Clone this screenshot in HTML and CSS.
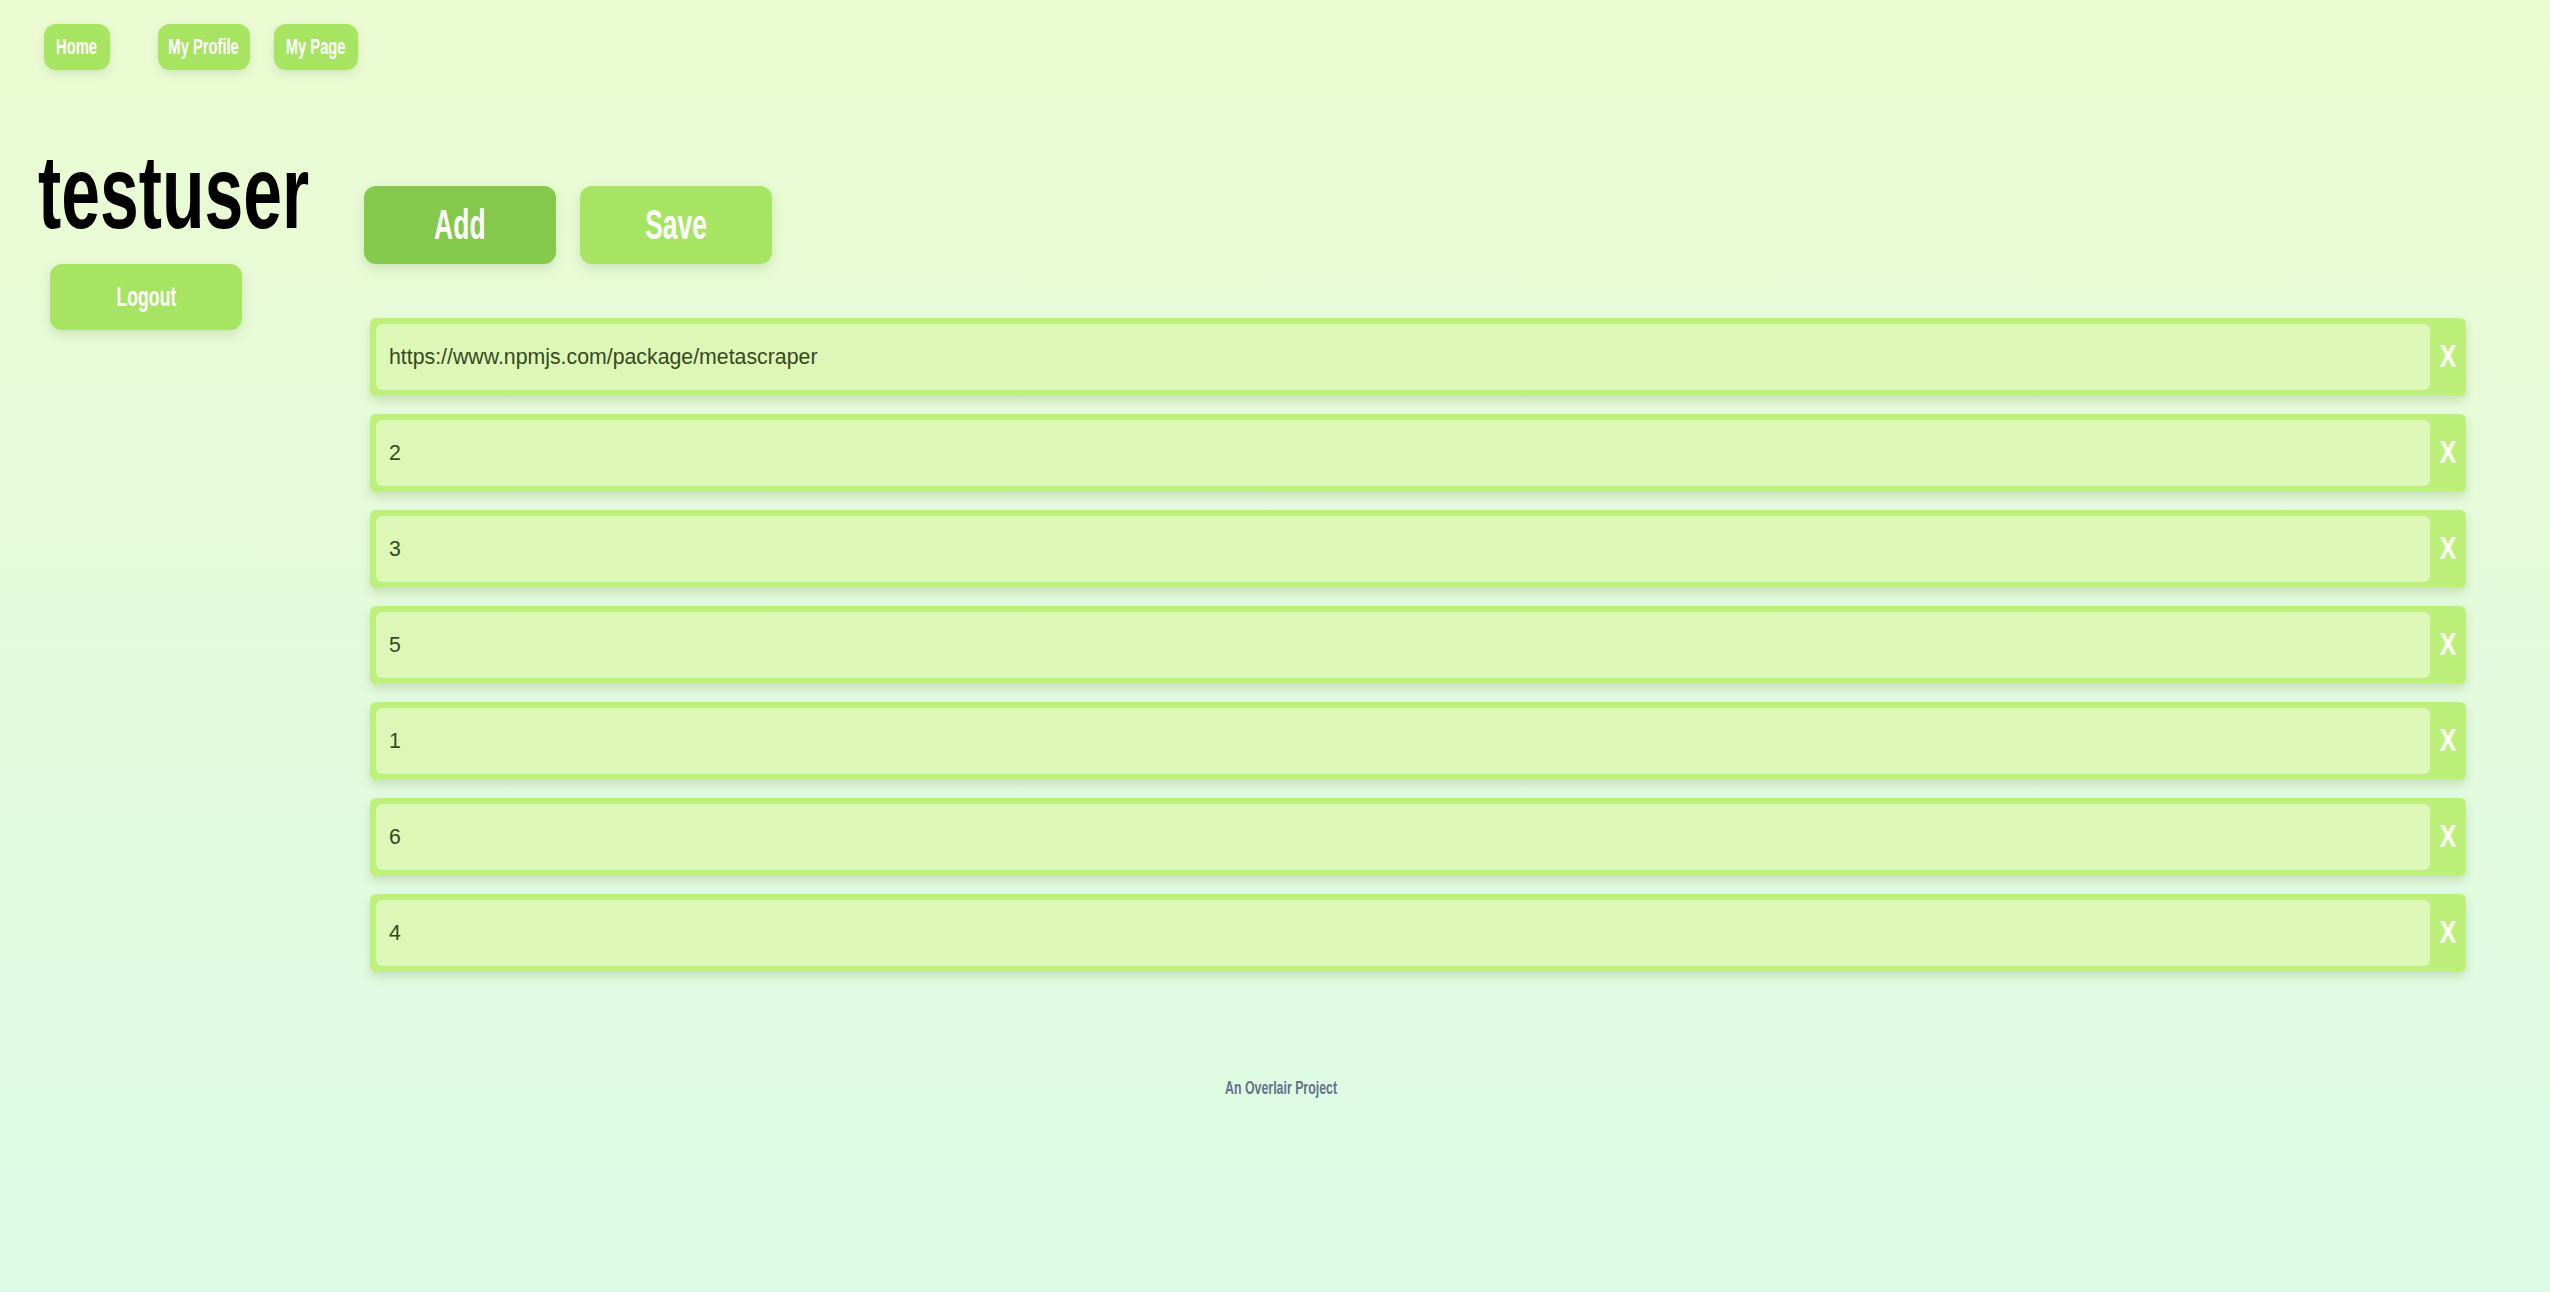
FILE: index.html
```html
<!DOCTYPE html>
<html lang="en">
<head>
<meta charset="utf-8">
<title>testuser</title>
<link rel="stylesheet" href="styles.css">
</head>
<body>
<nav class="nav">
  <a class="nav-btn nav-home" href="#"><span class="nav-text">Home</span></a>
  <a class="nav-btn nav-profile" href="#"><span class="nav-text">My Profile</span></a>
  <a class="nav-btn nav-page" href="#"><span class="nav-text">My Page</span></a>
</nav>
<div class="layout">
  <aside class="sidebar">
    <h1 class="title"><span class="title-text">testuser</span></h1>
    <button class="btn logout"><span class="narrow">Logout</span></button>
  </aside>
  <main class="content">
    <div class="actions">
      <button class="btn big add"><span class="narrow">Add</span></button>
      <button class="btn big save"><span class="narrow">Save</span></button>
    </div>
    <ul class="links">
      <li class="link-row"><input class="link-input" type="text" value="https://www.npmjs.com/package/metascraper"><span class="remove">X</span></li>
      <li class="link-row"><input class="link-input" type="text" value="2"><span class="remove">X</span></li>
      <li class="link-row"><input class="link-input" type="text" value="3"><span class="remove">X</span></li>
      <li class="link-row"><input class="link-input" type="text" value="5"><span class="remove">X</span></li>
      <li class="link-row"><input class="link-input" type="text" value="1"><span class="remove">X</span></li>
      <li class="link-row"><input class="link-input" type="text" value="6"><span class="remove">X</span></li>
      <li class="link-row"><input class="link-input" type="text" value="4"><span class="remove">X</span></li>
    </ul>
  </main>
</div>
<footer class="footer"><span class="footer-text">An Overlair Project</span></footer>
</body>
</html>
```
FILE: styles.css
```css
* { box-sizing: border-box; }

html, body {
  margin: 0;
  padding: 0;
}

body {
  min-height: 100vh;
  background: linear-gradient(to bottom, #ebfbd1, #dcfbe6);
  font-family: "Liberation Sans", Arial, sans-serif;
  color: #000;
}

.nav {
  display: flex;
  gap: 24px;
  padding: 24px 0 0 44px;
}

.nav-btn {
  display: flex;
  align-items: center;
  justify-content: center;
  height: 46px;
  border-radius: 12px;
  background: #a6e462;
  color: #fff;
  font-weight: 700;
  font-size: 22px;
  text-decoration: none;
  white-space: nowrap;
  box-shadow: 0 4px 10px rgba(60, 90, 20, 0.12);
}

.nav-text {
  display: inline-block;
  flex: none;
  transform: scaleX(0.67);
}

.nav-home { width: 66px; margin-right: 24px; }
.nav-profile { width: 92px; }
.nav-page { width: 84px; }

.layout {
  display: flex;
  margin-top: 78px;
  padding: 0 84px 0 38px;
}

.sidebar {
  width: 326px;
  flex: none;
}

.title {
  margin: 0;
  font-size: 104px;
  line-height: 88px;
  font-weight: 700;
  white-space: nowrap;
}

.title-text {
  display: inline-block;
  transform: scaleX(0.67);
  transform-origin: left center;
}

.narrow {
  display: inline-block;
  transform: scaleX(0.63);
}

.btn {
  border: none;
  padding: 0;
  color: #fff;
  font-family: inherit;
  font-weight: 700;
  background: #a6e462;
  box-shadow: 0 5px 12px rgba(60, 90, 20, 0.14);
  cursor: pointer;
}

.logout {
  display: block;
  margin: 28px 0 0 12px;
  width: 192px;
  height: 66px;
  border-radius: 12px;
  font-size: 28px;
}

.content {
  flex: 1;
  padding-top: 38px;
}

.actions {
  display: flex;
  gap: 24px;
}

.big {
  width: 192px;
  height: 78px;
  border-radius: 12px;
  font-size: 42px;
}

.add { background: #84c94b; }
.save { background: #a6e462; }

.links {
  list-style: none;
  margin: 54px 0 0 6px;
  padding: 0;
  display: flex;
  flex-direction: column;
  gap: 18px;
}

.link-row {
  display: flex;
  align-items: center;
  height: 78px;
  padding: 6px 0 6px 6px;
  border-radius: 6px;
  background: #bdef7b;
  box-shadow: 0 5px 10px rgba(60, 90, 20, 0.16);
}

.link-input {
  flex: 1;
  height: 66px;
  border: none;
  border-radius: 6px;
  background: #dcf7b6;
  padding: 0 13px;
  font-family: inherit;
  font-size: 21.3px;
  color: #38481f;
  outline: none;
}

.remove {
  width: 36px;
  text-align: center;
  color: #fff;
  font-weight: 700;
  font-size: 31px;
  transform: scaleX(0.8);
}

.footer {
  margin-top: 104px;
  padding-left: 12px;
  text-align: center;
  font-size: 19px;
  line-height: 24px;
  font-weight: 700;
  color: #64748b;
}

.footer-text {
  display: inline-block;
  transform: scaleX(0.65);
}
```
